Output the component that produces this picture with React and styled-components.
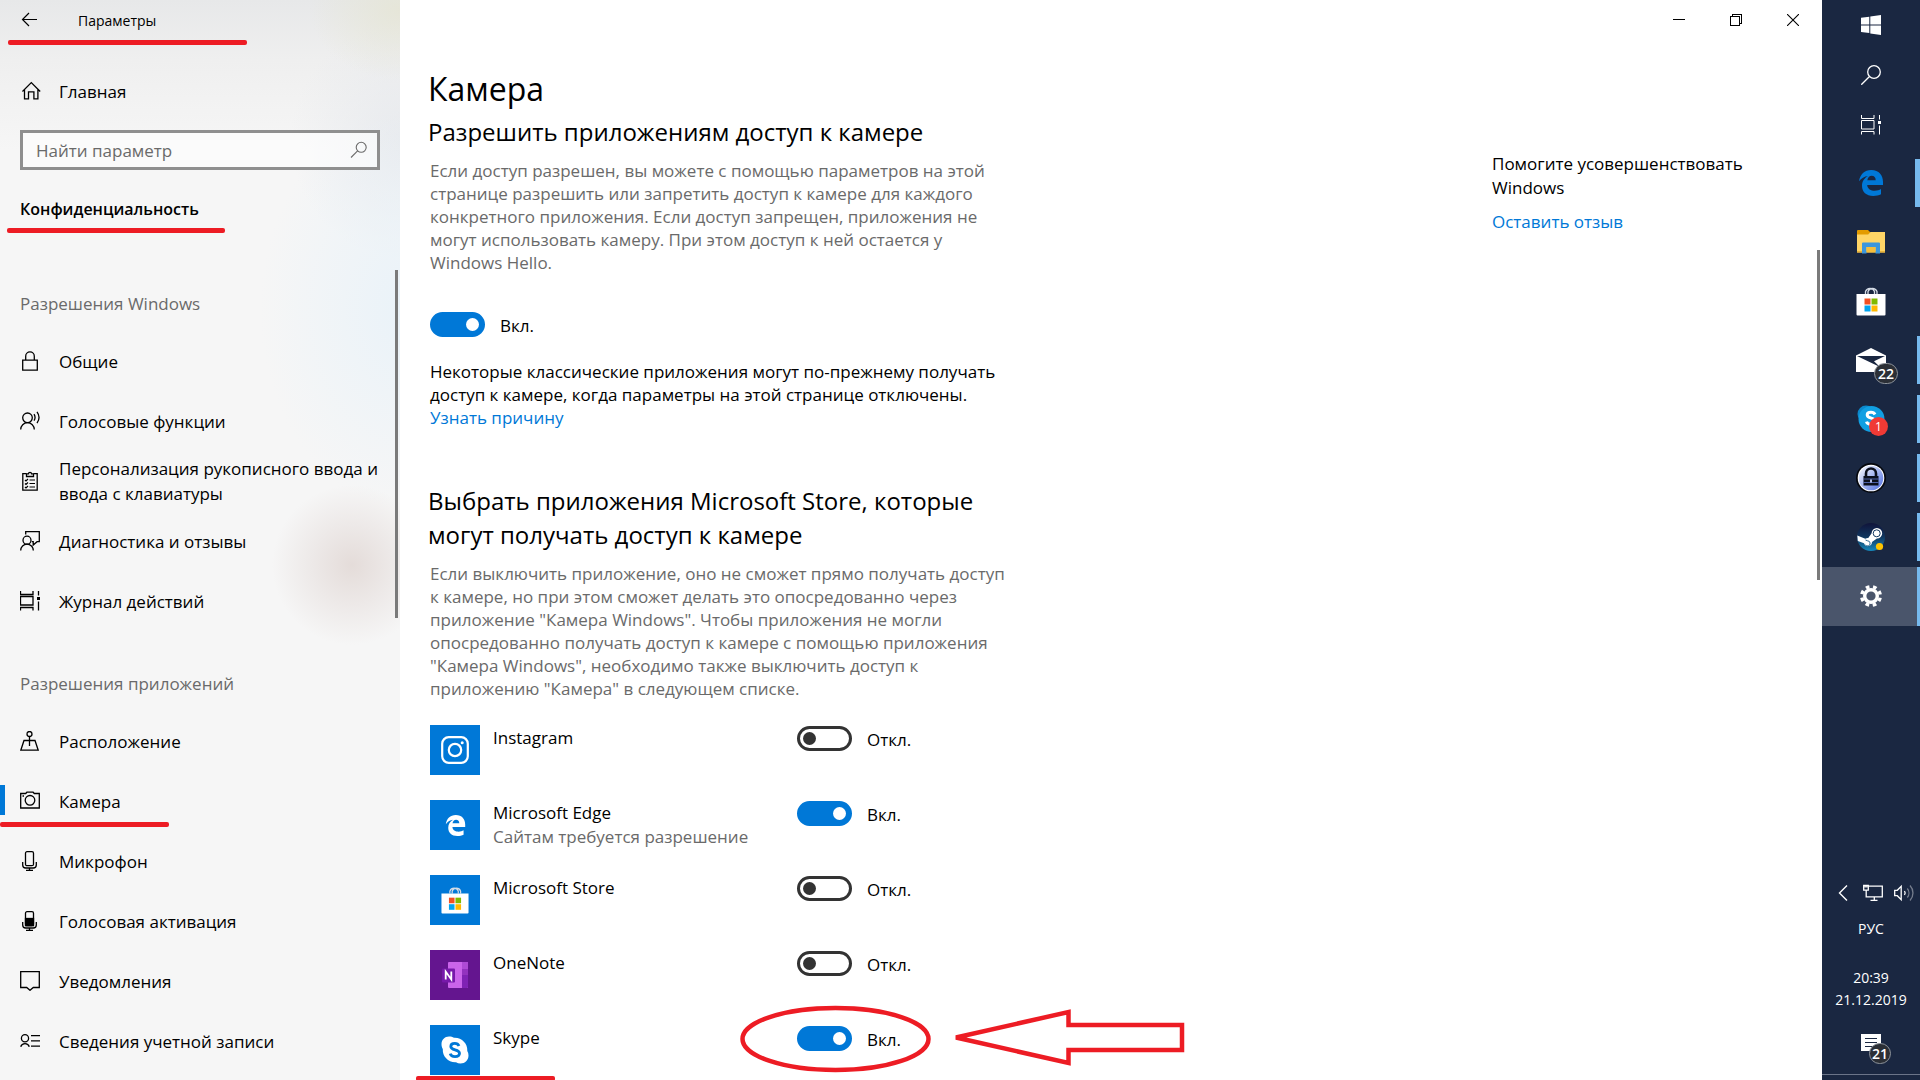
import React, { useState } from 'react'
import styled, { createGlobalStyle } from 'styled-components';

const GlobalStyle = createGlobalStyle`
  * {
    box-sizing: border-box;
  }

  body {
    margin: 0;
    overflow: hidden;
    background: #fff;
    color: #000;
    font-family: 'Open Sans', 'Noto Sans', sans-serif;
    font-size: 17px;
  }

  a {
    color: inherit;
    text-decoration: none;
  }

  button {
    padding: 0;
    border: 0;
    background: none;
    color: inherit;
    font: inherit;
  }

  svg {
    display: block;
  }
`;

const Desktop = styled.div`
  display: flex;
  height: 100vh;
`;

/* ---------- sidebar ---------- */

const Sidebar = styled.aside`
  position: relative;
  flex: 0 0 400px;
  overflow: hidden;
  background:
    radial-gradient(circle 80px at 352px 565px, rgba(226, 217, 214, 0.9) 0%, rgba(228, 220, 218, 0.5) 50%, rgba(230, 222, 220, 0) 100%),
    radial-gradient(ellipse 90px 70px at 400px 10px, rgba(229, 229, 212, 0.8) 0%, rgba(230, 230, 216, 0) 100%),
    radial-gradient(ellipse 150px 200px at 410px 310px, rgba(232, 242, 249, 0.9) 0%, rgba(232, 241, 248, 0) 100%),
    radial-gradient(ellipse 120px 120px at 410px 140px, rgba(228, 231, 236, 0.8) 0%, rgba(230, 233, 238, 0) 100%),
    linear-gradient(#e7e8e9 0px, #efefef 60px, #f6f6f6 150px);
`;

const TitleBar = styled.div`
  position: relative;
  display: flex;
  align-items: center;
  gap: 38px;
  height: 40px;
  padding-left: 20px;
  font-size: 14px;
`;

const HomeLink = styled.a`
  display: flex;
  align-items: center;
  gap: 17px;
  height: 60px;
  margin-top: 21px;
  padding-left: 22px;
`;

const SearchBox = styled.label`
  display: flex;
  align-items: center;
  height: 40px;
  margin: 9px 20px 0;
  padding: 0 8px 0 13px;
  border: 3px solid #8f8f8f;
  background: rgba(255, 255, 255, 0.6);
  color: #6a6a6a;

  input {
    flex: 1;
    min-width: 0;
    padding: 0;
    border: 0;
    outline: 0;
    background: none;
    font: inherit;

    &::placeholder {
      color: #6a6a6a;
      opacity: 1;
    }
  }
`;

const Category = styled.h2`
  position: relative;
  margin: 22px 0 0;
  padding-left: 20px;
  height: 78px;
  font-size: 16px;
  line-height: 34px;
  font-weight: 600;
`;

const GroupTitle = styled.h3`
  display: flex;
  align-items: flex-end;
  height: ${props => props.$first ? 61 : 80}px;
  margin: 0;
  padding: 0 20px 15px;
  color: #6a6a6a;
  font-size: 17px;
  line-height: 24px;
  font-weight: 400;
`;

const NavList = styled.ul`
  margin: 0;
  padding: 0;
  list-style: none;
`;

const NavLink = styled.a`
  position: relative;
  display: flex;
  align-items: center;
  gap: 19px;
  height: 60px;
  padding: 0 10px 0 20px;
  line-height: 25px;

  svg {
    flex: none;
  }

  &[aria-current='page']::before {
    content: '';
    position: absolute;
    left: 0;
    top: 14px;
    width: 5px;
    height: 30px;
    background: #0078d7;
  }
`;

const ScrollThumb = styled.div`
  position: absolute;
  top: ${props => props.$top}px;
  right: 2px;
  width: 3px;
  height: ${props => props.$size}px;
  background: #7a7a7a;
`;

/* red marker strokes */
const Marker = styled.span`
  position: absolute;
  left: ${props => props.$left}px;
  top: ${props => props.$top}px;
  width: ${props => props.$width}px;
  height: 5px;
  border-radius: 2px;
  background: #ed1c24;
`;

/* ---------- main pane ---------- */

const Main = styled.main`
  position: relative;
  flex: 1;
  min-width: 0;
  overflow: hidden;
  background: #fff;
`;

const WindowControls = styled.div`
  display: flex;
  justify-content: flex-end;
  height: 40px;
  padding-right: 1px;

  button {
    display: flex;
    align-items: center;
    justify-content: center;
    width: 57px;
  }
`;

const Page = styled.div`
  display: flex;
  justify-content: space-between;
  padding: 26px 30px 0 30px;
`;

const Settings = styled.section`
  width: 580px;
`;

const PageTitle = styled.h1`
  margin: 0 0 0 -2px;
  font-size: 32px;
  line-height: 46px;
  font-weight: 400;
`;

const SectionTitle = styled.h2`
  margin: ${props => props.$spaced ? 55 : 3}px 0 0 -2px;
  font-size: 24px;
  line-height: 34px;
  font-weight: 400;
`;

const Text = styled.p`
  margin: ${props => props.$gap}px 0 0;
  color: ${props => props.$muted ? '#6a6a6a' : '#000'};
  line-height: 23px;
`;

const AccentLink = styled.a`
  color: #0078d7;
`;

const ToggleLabel = styled.label`
  display: flex;
  align-items: flex-start;
  gap: 15px;
  line-height: 28px;
`;

const ToggleInput = styled.input`
  appearance: none;
  flex: none;
  width: 55px;
  height: 25px;
  margin: 0;
  border: 3px solid #333;
  border-radius: 13px;
  background: #fff;

  &::before {
    content: '';
    display: block;
    width: 13px;
    height: 13px;
    margin: 3px;
    border-radius: 50%;
    background: #333;
  }

  &:checked {
    border-color: #0078d7;
    background: #0078d7;
  }

  &:checked::before {
    margin-left: 33px;
    background: #fff;
  }
`;

const MasterToggle = styled.div`
  margin-top: 38px;
`;

const AppList = styled.ul`
  display: grid;
  gap: 25px;
  margin: 25px 0 0;
  padding: 0;
  list-style: none;
`;

const AppRow = styled.li`
  position: relative;
  display: grid;
  grid-template-columns: 50px 291px auto;
  column-gap: 13px;
  height: 50px;
`;

const AppTile = styled.div`
  display: flex;
  align-items: center;
  justify-content: center;
  width: 50px;
  height: 50px;
  background: ${props => props.$color};
`;

const AppName = styled.div`
  padding-top: 1px;
  line-height: 24px;

  small {
    display: block;
    color: #6a6a6a;
    font-size: 17px;
    line-height: 23px;
  }
`;

const ToggleCell = styled.div`
  padding-top: 1px;
`;

const Callout = styled.svg`
  position: absolute;
  left: 310px;
  top: -20px;
  pointer-events: none;
`;

const Feedback = styled.section`
  width: 300px;
  padding-top: 86px;
  line-height: 24px;

  p {
    margin: 0 0 10px;
  }
`;

/* ---------- taskbar ---------- */

const Taskbar = styled.nav`
  display: flex;
  flex-direction: column;
  flex: 0 0 98px;
  background: #1a2741;
  color: #fff;
`;

const SystemButton = styled.button`
  display: flex;
  align-items: center;
  justify-content: center;
  height: 50px;
`;

const TaskList = styled.div`
  display: flex;
  flex-direction: column;
  margin-top: 4px;
`;

const TaskButton = styled.button`
  position: relative;
  display: flex;
  align-items: center;
  justify-content: center;
  height: 59px;
  padding-bottom: 2px;
  background: ${props => props.$active ? '#4a556b' : 'none'};

  &::after {
    content: '';
    position: absolute;
    right: 0;
    top: ${props => props.$active ? 0 : 5}px;
    bottom: ${props => props.$active ? 0 : 6}px;
    width: ${props => props.$running || 0}px;
    background: #76b9ed;
  }
`;

const Badge = styled.span`
  position: absolute;
  left: ${props => props.$left}px;
  top: ${props => props.$top}px;
  min-width: ${props => props.$size}px;
  height: ${props => props.$alert ? 19 : 21}px;
  border: ${props => props.$alert ? 'none' : '1px solid #8d939b'};
  border-radius: 12px;
  background: ${props => props.$alert ? '#f03a35' : '#2b2f36'};
  font-size: ${props => props.$alert ? 12 : 14}px;
  font-weight: ${props => props.$alert ? 400 : 600};
  line-height: 19px;
  text-align: center;
`;

const Tray = styled.div`
  display: flex;
  flex-direction: column;
  margin-top: auto;
  padding-bottom: 5px;
  font-size: 14px;
  text-align: center;
`;

const TrayIcons = styled.div`
  display: flex;
  align-items: center;
  justify-content: space-between;
  height: 30px;
  padding: 0 6px 0 16px;
`;

const Language = styled.button`
  height: 40px;
`;

const Clock = styled.button`
  margin-top: 19px;
  line-height: 22px;

  time {
    display: block;
  }
`;

const ActionCenter = styled.button`
  position: relative;
  display: flex;
  justify-content: center;
  height: 64px;
  padding-top: 23px;
  border-bottom: 1px solid #6b7488;
`;

/* ---------- icons ---------- */

const Line = ({ size = 20, children, ...rest }) => (
  <svg width={size} height={size} viewBox={`0 0 ${size} ${size}`} fill="none" stroke="currentColor" strokeWidth="1.3" aria-hidden="true" {...rest}>
    {children}
  </svg>
);

const TimelineShape = () => (
  <>
    <path d="M.5 0v3.500h12.500V0M.5 19.500V16.500h12.500v3M.5 5.500h12.500v8.500H.5zM18.500 0v4.500M18.500 10.500v9" />
    <rect x="17" y="6" width="3" height="3" fill="currentColor" stroke="none" />
  </>
);

const icons = {
  back: <Line strokeWidth="1.2"><path d="M17 9.500H2.500M9 3L2.500 9.500 9 16" /></Line>,
  home: <Line><path d="M.4 10.500L9.300 1.600l8.900 8.900M2.500 8.600v9.200h4v-7h5.400v7h4V8.600" /></Line>,
  search: <Line strokeWidth="1.1"><circle cx="12.200" cy="7.300" r="5" /><path d="M8.600 10.900L2 17.500" /></Line>,
  lock: <Line><path d="M2.700 9.200h14.600v10H2.700zM5.700 9V5.200a4.300 4.300 0 0 1 8.600 0V9" /></Line>,
  voice: (
    <Line>
      <circle cx="7.500" cy="6.800" r="4.800" />
      <path d="M.7 18.500a6.800 6.800 0 0 1 13.600 0M14 3.200a6 6 0 0 1 0 6.500M17 .9a9.500 9.500 0 0 1 0 11.200" />
    </Line>
  ),
  clipboard: (
    <Line>
      <path d="M6.500 2.700H2.800v16.500h14.400V2.700h-3.700M6.500 5.500V2.800h2a1.500 1.500 0 0 1 3 0h2v2.700z" />
      <path d="M9.500 9H15M9.500 12.500H15M9.500 16H15M5 9l1 1 2-2M5 12.500l1 1 2-2M5 16l1 1 2-2" strokeWidth="1.2" />
    </Line>
  ),
  feedback: (
    <Line>
      <circle cx="7" cy="9.200" r="4" />
      <path d="M.7 19.500a6.300 6.300 0 0 1 12.600 0M5.700 3.500V.7h13.600v10h-2.200L13.200 14v-3.300h-1.400" />
    </Line>
  ),
  timeline: <Line><TimelineShape /></Line>,
  location: (
    <Line>
      <circle cx="9.500" cy="3" r="2.500" />
      <path d="M9.500 5.500V15M6.500 9.500H4L.8 19.200h17.400L15 9.500h-2.500M6 9.500h7" />
    </Line>
  ),
  camera: (
    <Line>
      <path d="M.7 2.500h5L6.900 1.200h6.200l1.200 1.300h5V17H.7z" />
      <circle cx="10" cy="9.300" r="4.800" />
      <path d="M2.500 5H4" />
    </Line>
  ),
  microphone: (
    <Line>
      <rect x="5.500" y=".7" width="8" height="14" rx="1.500" />
      <path d="M2.700 11v3a3 3 0 0 0 3 3h7.600a3 3 0 0 0 3-3v-3M9.500 17v2.300M6 19.300h7" />
    </Line>
  ),
  activation: (
    <Line>
      <rect x="5.500" y=".7" width="8" height="14" rx="1.500" />
      <rect x="5.500" y="7.500" width="8" height="7.200" fill="currentColor" />
      <path d="M2.700 11v3a3 3 0 0 0 3 3h7.600a3 3 0 0 0 3-3v-3M9.500 17v2.300M6 19.300h7" />
    </Line>
  ),
  notifications: <Line><path d="M.7.700h18.600v15.800h-6L10 19.300l-3.300-2.800h-6z" /></Line>,
  account: (
    <Line>
      <circle cx="5" cy="7.200" r="3.600" />
      <path d="M.7 15.800a4.500 4.500 0 0 1 8.600 0M11 4.700h9M11 9.900h9M11 15.100h9" />
    </Line>
  ),
};

const WindowsLogo = () => (
  <svg width="20" height="20" viewBox="0 0 20 20" fill="#fff" aria-hidden="true">
    <path d="M0 2.800l8.300-1.100v7.700H0zM9.300 1.500L20 0v9.400H9.300zM0 10.400h8.300v7.700L0 17zM9.300 10.400H20V20L9.300 18.400z" />
  </svg>
);

const EdgeLogo = ({ size, color }) => (
  <svg width={size} height={size} viewBox="0 0 24 26" fill={color} aria-hidden="true">
    <path d="M0 11.300C1 4.500 5.500 0 12.300 0 20 0 24 5.200 24 11.800v3.100H8.200c.2 4 3.800 5.800 7.500 5.800 2.600 0 4.700-.7 6.300-1.700v5.300c-2 1.100-4.900 1.700-7.700 1.700C7.200 26 3 22 3 15.800c0-4.300 2.300-7.700 6-9.800-3.500.4-6.800 2.300-9 5.300zM8.300 10.300h8.400c0-2.800-1.500-4.500-4-4.500-2.400 0-4 1.800-4.400 4.500z" />
  </svg>
);

const StoreLogo = ({ width }) => (
  <svg width={width} height={width} viewBox="0 0 30 30" aria-hidden="true">
    <path d="M9.500 8V5.500a4.800 4.800 0 0 1 9 0V8M12 8V5.500a4.800 4.800 0 0 1 9 0V8" fill="none" stroke="#d5dce6" strokeWidth="1.300" />
    <path d="M.5 8h29v20.500a1 1 0 0 1-1 1h-27a1 1 0 0 1-1-1z" fill="#fff" />
    <path d="M8.500 12.500h6v6h-6z" fill="#f25022" />
    <path d="M15.500 12.500h6v6h-6z" fill="#7fba00" />
    <path d="M8.500 19.500h6v6h-6z" fill="#00a4ef" />
    <path d="M15.500 19.500h6v6h-6z" fill="#ffb900" />
  </svg>
);

const InstagramLogo = () => (
  <svg width="28" height="28" viewBox="0 0 28 28" fill="none" stroke="#fff" strokeWidth="2.2" aria-hidden="true">
    <rect x="1.200" y="1.200" width="25.600" height="25.600" rx="6.500" />
    <circle cx="14" cy="14" r="6.200" />
    <circle cx="21.200" cy="6.800" r="1.500" fill="#fff" stroke="none" />
  </svg>
);

const OneNoteLogo = () => (
  <svg width="28" height="28" viewBox="0 0 28 28" aria-hidden="true">
    <rect x="7" y="1" width="20" height="26" rx="1" fill="#ca64ea" />
    <path d="M21 1h5a1 1 0 0 1 1 1v6h-6z" fill="#ae4bd5" />
    <path d="M21 8h6v6h-6z" fill="#9332bf" />
    <path d="M21 14h6v12a1 1 0 0 1-1 1h-5z" fill="#7f22b4" />
    <rect x="1" y="7.500" width="13" height="14" rx="1" fill="#7719aa" />
    <path d="M4.700 18.500v-8l5.600 8v-8" fill="none" stroke="#fff" strokeWidth="1.800" />
  </svg>
);

const SkypeLogo = () => (
  <svg width="28" height="28" viewBox="0 0 28 28" aria-hidden="true">
    <path d="M8 .5c2 0 3.600.5 5 1.300C20.500 1.300 26.800 7.500 26.300 15c.8 1.300 1.200 2.800 1.200 4.500 0 4.500-3.500 8-8 8-1.700 0-3.200-.4-4.500-1.200C7.500 26.800 1.300 20.500 1.800 13 1 11.600.5 10 .5 8 .5 3.800 3.800.5 8 .5z" fill="#fff" />
    <path d="M18 10c-.7-1.700-2-2.600-4.200-2.600-2.400 0-4 1.100-4 3 0 4.500 8.700 2.300 8.700 6.900 0 2.200-1.900 3.300-4.500 3.300-2.500 0-4.200-1-4.800-3" fill="none" stroke="#0078d7" strokeWidth="2.800" />
  </svg>
);

const ExplorerIcon = () => (
  <svg width="28" height="24" viewBox="0 0 28 24" aria-hidden="true">
    <path d="M0 1a1 1 0 0 1 1-1h10l2.500 2.500L11 5H0z" fill="#e39b00" />
    <path d="M0 4.500h11L13.500 2H28v20.500H0z" fill="#ffd566" />
    <path d="M0 21h28v1.500H0z" fill="#e8b33a" />
    <path d="M5 23.500v-10a1 1 0 0 1 1-1h16a1 1 0 0 1 1 1v10h-4.500V17h-9v6.500z" fill="#3b96dd" />
    <path d="M9.500 17h9v5h-9z" fill="#f5be3c" />
  </svg>
);

const MailIcon = () => (
  <svg width="30" height="24" viewBox="0 0 30 24" aria-hidden="true">
    <path d="M0 7.500L15 0l15 7.500V24H0z" fill="#fff" />
    <path d="M1 8h28l-11 5.200L24 19z" fill="#1a2741" />
  </svg>
);

const SkypeTaskIcon = () => (
  <svg width="28" height="28" viewBox="0 0 28 28" aria-hidden="true">
    <circle cx="9" cy="9" r="8.500" fill="#0b88cc" />
    <circle cx="14.500" cy="14" r="13" fill="#119fe2" />
    <path d="M18 9.500c-.7-1.500-2-2.200-4-2.200-2.300 0-3.800 1-3.800 2.700 0 4 8 2.300 8 6.300 0 2-1.700 3-4.200 3-2.300 0-4-1-4.500-2.700" fill="none" stroke="#fff" strokeWidth="3" />
  </svg>
);

const KeePassIcon = () => (
  <svg width="30" height="30" viewBox="0 0 30 30" aria-hidden="true">
    <defs>
      <linearGradient id="keepass" x1="0" y1="0" x2="1" y2="1">
        <stop offset="0" stopColor="#fff" />
        <stop offset="1" stopColor="#4a6be0" />
      </linearGradient>
    </defs>
    <circle cx="15" cy="15" r="15" fill="#05070d" />
    <circle cx="15" cy="15" r="13.300" fill="#fff" />
    <circle cx="15" cy="15" r="12.300" fill="url(#keepass)" />
    <path d="M10 14v-3.500a5 5 0 0 1 10 0V14" fill="none" stroke="#0b0f1c" strokeWidth="2.600" />
    <path d="M7.500 13h15v9.500h-15z" fill="#0b0f1c" />
    <path d="M7.500 16h15M7.500 19.500h15" stroke="#5d74c8" strokeWidth=".8" />
    <path d="M15 16.500v3" stroke="#c3cdf6" strokeWidth="1.800" />
  </svg>
);

const SteamIcon = () => (
  <svg width="28" height="28" viewBox="0 0 28 28" aria-hidden="true">
    <defs>
      <linearGradient id="steam" x1="0" y1="0" x2="0" y2="1">
        <stop offset="0" stopColor="#10143a" />
        <stop offset=".5" stopColor="#10375f" />
        <stop offset="1" stopColor="#1689bd" />
      </linearGradient>
    </defs>
    <circle cx="14" cy="14" r="14" fill="url(#steam)" />
    <path d="M.3 12.500l8 3.300c1-.6 2-.8 3-.7l3.300-4.800a5.300 5.300 0 1 1 5.300 5.300l-4.900 3.500a4.100 4.100 0 0 1-8 1.200L.8 18z" fill="#fff" />
    <circle cx="19.700" cy="10.300" r="3.500" fill="#fff" stroke="#10375f" strokeWidth="1" />
    <path d="M8.500 17l2 .8a2.600 2.600 0 1 1-2.300 3.800" fill="none" stroke="#1a5a86" strokeWidth=".9" />
    <circle cx="22.500" cy="23.500" r="3.600" fill="#ffc400" />
  </svg>
);

const GearIcon = () => (
  <svg width="22" height="22" viewBox="0 0 22 22" fill="none" stroke="#fff" aria-hidden="true">
    <circle cx="11" cy="11" r="6.300" strokeWidth="3.400" />
    <circle cx="11" cy="11" r="9.300" strokeWidth="3.400" strokeDasharray="3.650" strokeDashoffset="-1.800" />
  </svg>
);

const NetworkIcon = () => (
  <Line strokeWidth="1.3">
    <path d="M5.500 3.200h13.800v10.700H3.200V7.500M11.300 14v3.300M7.500 17.300h7M.7 2.500h4.600v4.700H.7zM2.200 4.500v-2M3.800 4.500v-2" />
  </Line>
);

const VolumeIcon = () => (
  <Line strokeWidth="1.3">
    <path d="M.7 7.300h2.600l3.900-4v13.400l-3.900-4H.7z" />
    <path d="M10.500 8a3.500 3.500 0 0 1 0 4" />
    <path d="M13.300 5.500a7 7 0 0 1 0 9M16 2.500a11 11 0 0 1 0 15" opacity=".4" />
  </Line>
);

const ActionCenterIcon = () => (
  <svg width="20" height="20" viewBox="0 0 20 20" aria-hidden="true">
    <path d="M0 0h20v17h-7.500L9 20v-3H0z" fill="#fff" />
    <path d="M4 4.500h12M4 8.500h12M4 12.500h8" stroke="#1a2741" strokeWidth="1.2" />
  </svg>
);

/* ---------- data ---------- */

const windowsPermissions = [
  { label: 'Общие', icon: 'lock' },
  { label: 'Голосовые функции', icon: 'voice' },
  { label: 'Персонализация рукописного ввода и ввода с клавиатуры', icon: 'clipboard' },
  { label: 'Диагностика и отзывы', icon: 'feedback' },
  { label: 'Журнал действий', icon: 'timeline' },
]

const appPermissions = [
  { label: 'Расположение', icon: 'location' },
  { label: 'Камера', icon: 'camera', current: true },
  { label: 'Микрофон', icon: 'microphone' },
  { label: 'Голосовая активация', icon: 'activation' },
  { label: 'Уведомления', icon: 'notifications' },
  { label: 'Сведения учетной записи', icon: 'account' },
]

const initialApps = [
  { name: 'Instagram', color: '#0078d7', logo: <InstagramLogo />, on: false },
  { name: 'Microsoft Edge', note: 'Сайтам требуется разрешение', color: '#0078d7', logo: <EdgeLogo size={21} color="#fff" />, on: true },
  { name: 'Microsoft Store', color: '#0078d7', logo: <StoreLogo width={28} />, on: false },
  { name: 'OneNote', color: '#64158f', logo: <OneNoteLogo />, on: false },
  { name: 'Skype', color: '#0078d7', logo: <SkypeLogo />, on: true, marked: true },
]

const Toggle = ({ checked, onChange, name }) => (
  <ToggleLabel>
    <ToggleInput type="checkbox" role="switch" aria-label={name} checked={checked} onChange={onChange} />
    {checked ? 'Вкл.' : 'Откл.'}
  </ToggleLabel>
);

const renderNav = (items) => (
  <NavList>
    {items.map(item => (
      <li key={item.label}>
        <NavLink href="#" aria-current={item.current ? 'page' : undefined}>
          {icons[item.icon]}
          <span>{item.label}</span>
          {item.current && <Marker $left={0} $top={51} $width={169} />}
        </NavLink>
      </li>
    ))}
  </NavList>
);

const App = () => {

  const [access, setAccess] = useState(true)
  const [apps, setApps] = useState(initialApps)

  const toggleApp = (name) => {
    setApps(apps.map(app => app.name === name ? { ...app, on: !app.on } : app))
  }

  return (
    <Desktop>
      <GlobalStyle />
      <Sidebar>
        <TitleBar>
          <button type="button" aria-label="Назад">{icons.back}</button>
          <span>Параметры</span>
          <Marker $left={8} $top={40} $width={239} />
        </TitleBar>
        <HomeLink href="#">
          {icons.home}
          <span>Главная</span>
        </HomeLink>
        <SearchBox>
          <input type="text" placeholder="Найти параметр" />
          {icons.search}
        </SearchBox>
        <Category>
          Конфиденциальность
          <Marker $left={7} $top={36} $width={218} />
        </Category>
        <GroupTitle $first>Разрешения Windows</GroupTitle>
        {renderNav(windowsPermissions)}
        <GroupTitle>Разрешения приложений</GroupTitle>
        {renderNav(appPermissions)}
        <ScrollThumb $top={270} $size={348} />
      </Sidebar>

      <Main>
        <WindowControls>
          <button type="button" aria-label="Свернуть"><Line size={12} shapeRendering="crispEdges" strokeWidth="1"><path d="M0 5.500h12" /></Line></button>
          <button type="button" aria-label="Восстановить"><Line size={12} shapeRendering="crispEdges" strokeWidth="1"><path d="M.5 2.500h9v9h-9zM2.500 2.500v-2h9v9h-2" /></Line></button>
          <button type="button" aria-label="Закрыть"><Line size={12} strokeWidth="1.1"><path d="M0 0l12 12M12 0L0 12" /></Line></button>
        </WindowControls>
        <Page>
          <Settings>
            <PageTitle>Камера</PageTitle>
            <SectionTitle>Разрешить приложениям доступ к камере</SectionTitle>
            <Text $muted $gap={10}>
              Если доступ разрешен, вы можете с помощью параметров на этой странице разрешить или запретить доступ к камере для каждого конкретного приложения. Если доступ запрещен, приложения не могут использовать камеру. При этом доступ к ней остается у Windows Hello.
            </Text>
            <MasterToggle>
              <Toggle name="Доступ к камере" checked={access} onChange={() => setAccess(!access)} />
            </MasterToggle>
            <Text $gap={20}>
              Некоторые классические приложения могут по-прежнему получать доступ к камере, когда параметры на этой странице отключены. <AccentLink href="#">Узнать причину</AccentLink>
            </Text>
            <SectionTitle $spaced>Выбрать приложения Microsoft Store, которые могут получать доступ к камере</SectionTitle>
            <Text $muted $gap={10}>
              Если выключить приложение, оно не сможет прямо получать доступ к камере, но при этом сможет делать это опосредованно через приложение "Камера Windows". Чтобы приложения не могли опосредованно получать доступ к камере с помощью приложения "Камера Windows", необходимо также выключить доступ к приложению "Камера" в следующем списке.
            </Text>
            <AppList>
              {apps.map(app => (
                <AppRow key={app.name}>
                  <AppTile $color={app.color}>{app.logo}</AppTile>
                  <AppName>
                    {app.name}
                    {app.note && <small>{app.note}</small>}
                  </AppName>
                  <ToggleCell>
                    <Toggle name={app.name} checked={app.on} onChange={() => toggleApp(app.name)} />
                  </ToggleCell>
                  {app.marked && (
                    <>
                      <Marker $left={-14} $top={51} $width={139} />
                      <Callout width="450" height="72" viewBox="0 0 450 72" fill="none" stroke="#ed1c24" strokeWidth="4.500" aria-hidden="true">
                        <ellipse cx="95.500" cy="34" rx="93" ry="31" />
                        <path d="M216 32.500L328.500 7v13H442v25H328.500v13z" />
                      </Callout>
                    </>
                  )}
                </AppRow>
              ))}
            </AppList>
          </Settings>
          <Feedback>
            <p>Помогите усовершенствовать Windows</p>
            <AccentLink href="#">Оставить отзыв</AccentLink>
          </Feedback>
        </Page>
        <ScrollThumb $top={250} $size={330} />
      </Main>

      <Taskbar>
        <SystemButton type="button" aria-label="Пуск"><WindowsLogo /></SystemButton>
        <SystemButton type="button" aria-label="Поиск">
          <Line><circle cx="13" cy="7" r="6.300" /><path d="M8.500 11.500L.3 19.700" /></Line>
        </SystemButton>
        <SystemButton type="button" aria-label="Представление задач"><Line strokeWidth="1"><TimelineShape /></Line></SystemButton>
        <TaskList>
          <TaskButton type="button" aria-label="Edge" $running={5}><EdgeLogo size={26} color="#0078d7" /></TaskButton>
          <TaskButton type="button" aria-label="Проводник"><ExplorerIcon /></TaskButton>
          <TaskButton type="button" aria-label="Store"><StoreLogo width={30} /></TaskButton>
          <TaskButton type="button" aria-label="Почта" $running={3}>
            <MailIcon />
            <Badge $left={52} $top={32} $size={24}>22</Badge>
          </TaskButton>
          <TaskButton type="button" aria-label="Skype" $running={3}>
            <SkypeTaskIcon />
            <Badge $alert $left={47} $top={27} $size={19}>1</Badge>
          </TaskButton>
          <TaskButton type="button" aria-label="KeePass" $running={3}><KeePassIcon /></TaskButton>
          <TaskButton type="button" aria-label="Steam" $running={3}><SteamIcon /></TaskButton>
          <TaskButton type="button" aria-label="Параметры" $active $running={3}><GearIcon /></TaskButton>
        </TaskList>
        <Tray>
          <TrayIcons>
            <svg width="13" height="16" viewBox="0 0 13 16" fill="none" stroke="#fff" strokeWidth="1.400" aria-hidden="true"><path d="M9 .5L1.500 8 9 15.500" /></svg>
            <NetworkIcon />
            <VolumeIcon />
          </TrayIcons>
          <Language type="button">РУС</Language>
          <Clock type="button">
            <time>20:39</time>
            <time>21.12.2019</time>
          </Clock>
          <ActionCenter type="button" aria-label="Центр уведомлений">
            <ActionCenterIcon />
            <Badge $left={47} $top={32} $size={22}>21</Badge>
          </ActionCenter>
        </Tray>
      </Taskbar>
    </Desktop>
  )
}

export default App;
